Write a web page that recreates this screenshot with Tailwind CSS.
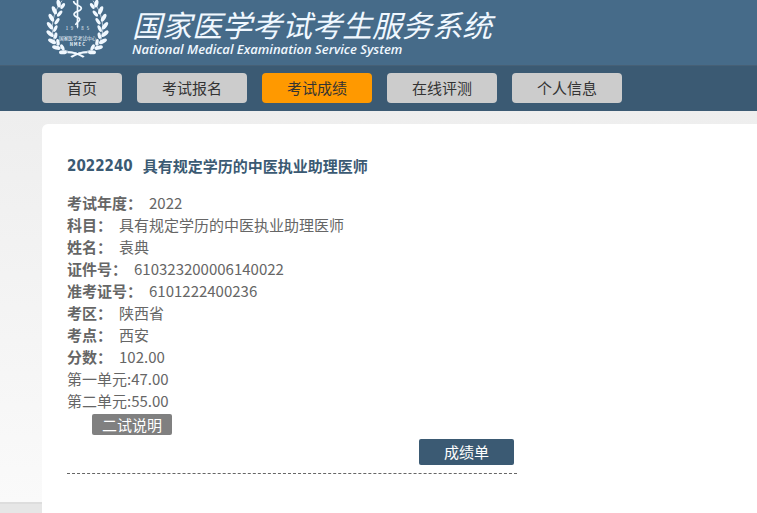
<!DOCTYPE html>
<html lang="zh-CN">
<head>
    <meta charset="UTF-8">
    <meta name="viewport" content="width=device-width, initial-scale=1.0">
    <title>国家医学考试考生服务系统</title>
    <script src="https://cdn.jsdelivr.net/npm/@tailwindcss/browser@4"></script>
</head>
<body class="flex min-h-screen flex-col overflow-x-hidden bg-white font-['Noto_Sans_CJK_SC',sans-serif] text-[15px] leading-[22px] text-[#666]">

    <header class="flex h-[65px] items-start bg-[#466b89] pl-[46px] text-[#f0f8ff]">
        <svg class="h-[60px] w-16 shrink-0" viewBox="48 0 192 180" fill="currentColor" aria-hidden="true">
            <defs>
                <!-- left half of the wreath, mirrored for the right -->
                <g id="branch">
                    <path d="M96 2C70 36 58 82 74 124C82 142 104 156 140 158" fill="none" stroke="currentColor" stroke-width="2"/>
                    <ellipse cx="86" cy="11" rx="6" ry="12" transform="rotate(-12 86 11)"/>
                    <ellipse cx="98" cy="18" rx="5" ry="10" transform="rotate(35 98 18)"/>
                    <ellipse cx="73" cy="31" rx="6" ry="13" transform="rotate(-24 73 31)"/>
                    <ellipse cx="89" cy="41" rx="5" ry="11" transform="rotate(40 89 41)"/>
                    <ellipse cx="64" cy="53" rx="6" ry="13" transform="rotate(-30 64 53)"/>
                    <ellipse cx="81" cy="64" rx="5" ry="11" transform="rotate(35 81 64)"/>
                    <ellipse cx="60" cy="77" rx="6" ry="13" transform="rotate(-38 60 77)"/>
                    <ellipse cx="76" cy="86" rx="5" ry="11" transform="rotate(25 76 86)"/>
                    <ellipse cx="60" cy="101" rx="6" ry="13" transform="rotate(-50 60 101)"/>
                    <ellipse cx="77" cy="107" rx="5" ry="10" transform="rotate(10 77 107)"/>
                    <ellipse cx="66" cy="124" rx="6" ry="13" transform="rotate(-60 66 124)"/>
                    <ellipse cx="84" cy="127" rx="5" ry="10" transform="rotate(-10 84 127)"/>
                    <ellipse cx="79" cy="143" rx="6" ry="13" transform="rotate(-75 79 143)"/>
                    <ellipse cx="97" cy="142" rx="5" ry="10" transform="rotate(-28 97 142)"/>
                    <ellipse cx="99" cy="157" rx="6" ry="12" transform="rotate(-92 99 157)"/>
                    <path d="M112 154C132 154 148 160 164 169L159 173C144 164 130 160 112 160Z"/>
                </g>
            </defs>
            <use href="#branch"/>
            <use href="#branch" transform="matrix(-1 0 0 1 285 0)"/>
            <path d="M140 0h5v80l-2 6l-3-6z"/>
            <path d="M131 3C130 16 154 15 154 25C153 35 132 33 132 43C132 53 150 50 149 59C148 67 137 66 137 75" fill="none" stroke="currentColor" stroke-width="5"/>
            <g class="font-['Noto_Sans_CJK_SC',sans-serif]" text-anchor="middle">
                <text x="111" y="89" font-size="13">1</text>
                <text x="126" y="89" font-size="13">9</text>
                <text x="157" y="89" font-size="13">8</text>
                <text x="174" y="89" font-size="13">5</text>
                <text x="143" y="121" font-size="14">国家医学考试中心</text>
                <text x="142" y="138" font-size="13" font-weight="700">N M E C</text>
            </g>
        </svg>
        <div class="ml-[22px] pt-[5px] whitespace-nowrap italic">
            <h1 class="text-[30px] leading-[38px]">国家医学考试考生服务系统</h1>
            <p class="font-['Open_Sans',sans-serif] text-[13px] leading-3 font-semibold">National Medical Examination Service System</p>
        </div>
    </header>

    <nav class="flex h-[46px] gap-[15px] border-t border-[#466076] bg-[#3b5a73] pt-[7px] pl-[42px] leading-[30px] text-[#333]">
        <a href="#" class="h-[30px] w-20 shrink-0 rounded bg-[#ccc] text-center">首页</a>
        <a href="#" class="h-[30px] w-[110px] shrink-0 rounded bg-[#ccc] text-center">考试报名</a>
        <a href="#" class="h-[30px] w-[110px] shrink-0 rounded bg-[#f90] text-center">考试成绩</a>
        <a href="#" class="h-[30px] w-[110px] shrink-0 rounded bg-[#ccc] text-center">在线评测</a>
        <a href="#" class="h-[30px] w-[110px] shrink-0 rounded bg-[#ccc] text-center">个人信息</a>
    </nav>

    <main class="flex flex-1 flex-col bg-linear-to-b from-[#eee] to-[#fafafa] pt-[13px] pl-[42px]">
        <!-- the panel runs on over the footer -->
        <section class="relative z-10 -mb-3 flex-1 rounded-tl-md bg-white pt-[31px] pb-10 pl-[25px]">
            <h2 class="mb-[15px] flex gap-[10px] font-bold text-[#3b5a73]">
                <span class="font-['DejaVu_Sans_Condensed',sans-serif]">2022240</span>
                <span>具有规定学历的中医执业助理医师</span>
            </h2>

            <dl>
                <div class="flex gap-[7px]"><dt class="font-bold">考试年度：</dt><dd>2022</dd></div>
                <div class="flex gap-[7px]"><dt class="font-bold">科目：</dt><dd>具有规定学历的中医执业助理医师</dd></div>
                <div class="flex gap-[7px]"><dt class="font-bold">姓名：</dt><dd>袁典</dd></div>
                <div class="flex gap-[7px]"><dt class="font-bold">证件号：</dt><dd>610323200006140022</dd></div>
                <div class="flex gap-[7px]"><dt class="font-bold">准考证号：</dt><dd>6101222400236</dd></div>
                <div class="flex gap-[7px]"><dt class="font-bold">考区：</dt><dd>陕西省</dd></div>
                <div class="flex gap-[7px]"><dt class="font-bold">考点：</dt><dd>西安</dd></div>
                <div class="flex gap-[7px]"><dt class="font-bold">分数：</dt><dd>102.00</dd></div>
                <div class="flex"><dt>第一单元:</dt><dd>47.00</dd></div>
                <div class="flex"><dt>第二单元:</dt><dd>55.00</dd></div>
            </dl>

            <div class="flex w-[450px] max-w-full flex-col border-b border-dashed border-[#666] pt-[2px] pb-2 text-white">
                <button type="button" class="ml-[25px] h-[21px] w-20 rounded-xs bg-[#808080] leading-5">二试说明</button>
                <button type="button" class="mt-1 mr-[3px] h-[26px] w-[95px] self-end rounded-xs bg-[#3b5a73] leading-6">成绩单</button>
            </div>
        </section>
    </main>

    <footer class="h-3 border-t-2 border-[#ddd] bg-[#e6e6e6]"></footer>
</body>
</html>
